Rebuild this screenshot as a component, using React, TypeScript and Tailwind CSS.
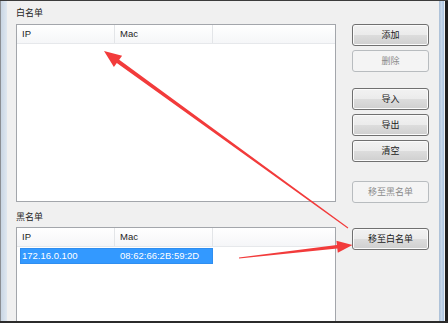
const CJK = '"Noto Sans CJK SC", "Liberation Sans", sans-serif';
const LATIN = '"Liberation Sans", "Noto Sans CJK SC", sans-serif';

type Btn = { label: string; disabled?: boolean; mt: string };

const BUTTONS: Btn[] = [
  { label: '添加', mt: 'mt-[23px]' },
  { label: '删除', disabled: true, mt: 'mt-[4px]' },
  { label: '导入', mt: 'mt-[16px]' },
  { label: '导出', mt: 'mt-[4px]' },
  { label: '清空', mt: 'mt-[4px]' },
  { label: '移至黑名单', disabled: true, mt: 'mt-[19px]' },
  { label: '移至白名单', mt: 'mt-[25px]' },
];

function ListHeader() {
  return (
    <div
      className="flex h-[19px] shrink-0 border-b border-[#e6e8eb] bg-[linear-gradient(#ffffff,#f5f6f8)] text-[9.5px] text-[#1e1e1e]"
      style={{ fontFamily: LATIN }}
    >
      <div className="flex w-[98px] items-center border-r border-[#e3e5e8] pl-[5px]">IP</div>
      <div className="flex w-[98px] items-center border-r border-[#e3e5e8] pl-[5px]">Mac</div>
      <div className="flex-1" />
    </div>
  );
}

function Arrows() {
  return (
    <svg className="pointer-events-none absolute left-0 top-0" width="448" height="323" viewBox="0 0 448 323">
      <polygon
        fill="#f23b3b"
        points="104,50 122.1,54.7 119.2,58.8 348.3,226.6 347.7,227.4 116.8,62 113.9,66.1"
      />
      <polygon
        fill="#f23b3b"
        points="352.5,244 336.4,239.7 336.9,243.9 238.9,256.4 239.1,257.6 337.3,247.5 337.8,251.7"
      />
    </svg>
  );
}

export default function App() {
  return (
    <div className="relative flex h-[323px] w-[448px] flex-col overflow-hidden border-t border-b-2 border-t-[#3c3c3c] border-b-[#2b2b2b] bg-[#f0f0f0]">
      <div className="flex min-h-0 flex-1 overflow-hidden">
        <div className="w-px bg-[#8c8f94]" />
        <div className="w-[6px] bg-[linear-gradient(90deg,#c9d6e4,#dfe7f0)]" />

        <div className="flex min-h-0 flex-1 overflow-hidden pl-[9px]" style={{ fontFamily: CJK }}>
          <div className="flex w-[320px] shrink-0 flex-col">
            <div className="h-[23px] shrink-0 text-[9px] leading-[24px] text-[#1e1e1e]">白名单</div>
            <div className="flex h-[178px] shrink-0 flex-col border border-[#a3a6ab] bg-white">
              <ListHeader />
            </div>
            <div className="h-[25px] shrink-0 pt-[9px] text-[9px] leading-[12px] text-[#1e1e1e]">黑名单</div>
            <div className="flex h-[120px] shrink-0 flex-col border border-[#a3a6ab] bg-white">
              <ListHeader />
              <div
                className="ml-[3px] mt-px flex h-[16px] w-[193px] items-center border border-[#2f8ef0] bg-[#3399ff] text-[9.5px] text-white"
                style={{ fontFamily: LATIN }}
              >
                <div className="w-[98px] pl-[1px]">172.16.0.100</div>
                <div className="pl-px">08:62:66:2B:59:2D</div>
              </div>
            </div>
          </div>

          <div className="ml-[16px] flex w-[77px] shrink-0 flex-col">
            {BUTTONS.map((b) =>
              b.disabled ? (
                <div
                  key={b.label}
                  className={`${b.mt} flex h-[22px] shrink-0 items-center justify-center rounded-[3px] border border-[#b8bcbf] bg-[#f4f4f4] text-[9px] text-[#8a8a8a]`}
                >
                  {b.label}
                </div>
              ) : (
                <div
                  key={b.label}
                  className={`${b.mt} flex h-[22px] shrink-0 items-center justify-center rounded-[3px] border border-[#707070] bg-[linear-gradient(#f2f2f2_0%,#ebebeb_50%,#dddddd_50%,#cfcfcf_100%)] text-[9px] text-[#1a1a1a] shadow-[inset_0_0_0_1px_#fbfbfb]`}
                >
                  {b.label}
                </div>
              ),
            )}
          </div>
          <div className="flex-1" />
        </div>

        <div className="w-[5px] bg-[linear-gradient(90deg,#a9bdd4,#c6d8ec_50%,#a9c2de)]" />
        <div className="w-px bg-[#eef2f6]" />
        <div className="w-[3px] bg-[#1f1f1f]" />
      </div>
      <Arrows />
    </div>
  );
}
